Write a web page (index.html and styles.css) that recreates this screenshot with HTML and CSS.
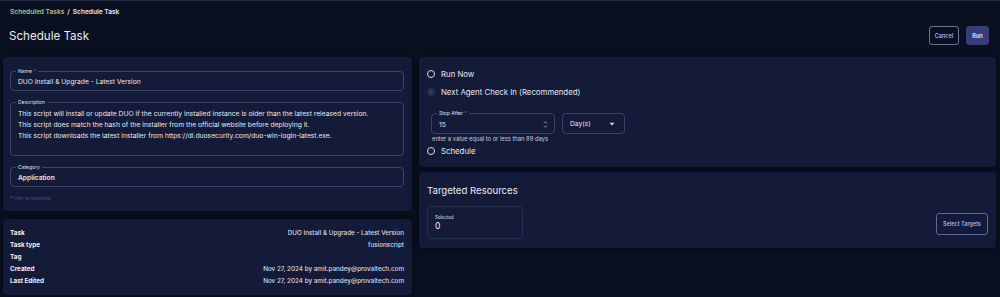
FILE: index.html
```html
<!DOCTYPE html>
<html lang="en">

<head>
    <meta charset="UTF-8">
    <meta name="viewport" content="width=device-width, initial-scale=1.0">
    <title>Schedule Task</title>
    <link rel="stylesheet" href="styles.css">
</head>

<body>
    <div class="topline"></div>
    <nav class="crumbs">
        <a href="#">Scheduled Tasks</a>
        <span class="sep">/</span>
        <span>Schedule Task</span>
    </nav>

    <div class="title-row">
        <h1>Schedule Task</h1>
        <div class="actions">
            <button class="btn btn-outline">Cancel</button>
            <button class="btn btn-primary">Run</button>
        </div>
    </div>

    <div class="layout">
        <!-- columna izquierda -->
        <div class="col">
            <section class="card form-card">
                <div class="field field-name">
                    <span class="field-label">Name <em>*</em></span>
                    <div class="field-value">DUO Install &amp; Upgrade - Latest Version</div>
                </div>
                <div class="field field-desc">
                    <span class="field-label">Description</span>
                    <div class="field-value">
                        <p>This script will install or update DUO if the currently installed instance is older than the latest released version.</p>
                        <p>This script does match the hash of the installer from the official website before deploying it.</p>
                        <p>This script downloads the latest installer from https://dl.duosecurity.com/duo-win-login-latest.exe.</p>
                    </div>
                </div>
                <div class="field field-name">
                    <span class="field-label">Category</span>
                    <div class="field-value strong">Application</div>
                </div>
                <div class="note"><em>*</em> Info is required</div>
            </section>

            <section class="card info-card">
                <div class="info-row"><span>Task</span><span>DUO Install &amp; Upgrade - Latest Version</span></div>
                <div class="info-row"><span>Task type</span><span>fusionscript</span></div>
                <div class="info-row"><span>Tag</span><span></span></div>
                <div class="info-row"><span>Created</span><span>Nov 27, 2024 by amit.pandey@provaltech.com</span></div>
                <div class="info-row"><span>Last Edited</span><span>Nov 27, 2024 by amit.pandey@provaltech.com</span></div>
            </section>
        </div>

        <!-- columna derecha -->
        <div class="col">
            <section class="card run-card">
                <label class="radio-row"><span class="radio"></span>Run Now</label>
                <label class="radio-row"><span class="radio radio-disabled"></span>Next Agent Check In (Recommended)</label>
                <div class="stop-after">
                    <div class="stop-fields">
                        <div class="field field-stop">
                            <span class="field-label">Stop After <em>*</em></span>
                            <div class="field-value">15</div>
                            <svg class="spin" width="5" height="9" viewBox="0 0 5 9">
                                <path d="M1 3.2 L2.5 1.7 L4 3.2" fill="none" stroke="#9aa1b8" stroke-width="0.9" />
                                <path d="M1 5.8 L2.5 7.3 L4 5.8" fill="none" stroke="#9aa1b8" stroke-width="0.9" />
                            </svg>
                        </div>
                        <div class="field field-select">
                            <div class="field-value">Day(s)</div>
                            <svg class="caret" width="6" height="4" viewBox="0 0 6 4">
                                <path d="M0.5 0.8 L5.5 0.8 L3 3.4 Z" fill="#d6dae6" />
                            </svg>
                        </div>
                    </div>
                    <div class="helper">enter a value equal to or less than 89 days</div>
                </div>
                <label class="radio-row"><span class="radio"></span>Schedule</label>
            </section>

            <section class="card targets-card">
                <h2>Targeted Resources</h2>
                <div class="targets-row">
                    <div class="selected-box">
                        <span class="sel-label">Selected</span>
                        <span class="sel-value">0</span>
                    </div>
                    <button class="btn btn-outline btn-targets">Select Targets</button>
                </div>
            </section>
        </div>
    </div>
</body>

</html>
```

FILE: styles.css
```css
body {
    margin: 0;
    padding: 0 4px 0 3px;
    background-color: #0b1020;
    color: #e4e7f0;
    font-family: Inter, "Noto Sans", sans-serif;
    height: 297px;
    overflow: hidden;
}

.topline {
    height: 1px;
    margin: 0 -4px 0 -3px;
    background-color: #242b44;
}

/* Migas de pan */
.crumbs {
    display: flex;
    align-items: center;
    gap: 3px;
    margin-top: 5px;
    padding-left: 7px;
    height: 12px;
    font-size: 6.6px;
    font-weight: 600;
    color: #e6e8ef;
}

.crumbs a {
    color: #a9c282;
    text-decoration: none;
}

.title-row {
    display: flex;
    align-items: center;
    justify-content: space-between;
    height: 35px;
    padding: 0 7px 0 6px;
}

h1 {
    margin: 0;
    font-size: 11.6px;
    font-weight: 400;
    color: #e8eaf2;
}

.actions {
    display: flex;
    gap: 7px;
}

.btn {
    font-family: inherit;
    font-size: 5.5px;
    font-weight: 600;
    height: 19px;
    border-radius: 3px;
    padding: 0;
    cursor: pointer;
}

.btn-outline {
    width: 30px;
    background: transparent;
    border: 1px solid #6b7190;
    color: #a6aeea;
}

.btn-primary {
    width: 23px;
    background-color: #373d78;
    border: 1px solid #373d78;
    color: #eef0ff;
}

/* Rejilla principal */
.layout {
    display: grid;
    grid-template-columns: 409px 1fr;
    gap: 7px;
    margin-top: 4px;
}

.col {
    display: flex;
    flex-direction: column;
}

.card {
    background-color: #131b38;
    border-radius: 4px;
    box-shadow: 0 0 6px rgba(0, 0, 0, 0.45);
}

.form-card {
    display: flex;
    flex-direction: column;
    gap: 11px;
    height: 154px;
    box-sizing: border-box;
    padding: 14px 8px 10px 7px;
}

.field {
    position: relative;
    border: 1px solid #3a4364;
    border-radius: 4px;
    box-sizing: border-box;
}

.field-label {
    position: absolute;
    top: -4px;
    left: 5px;
    padding: 0 2px;
    font-size: 5px;
    line-height: 6px;
    background-color: #131b38;
    color: #dde0ea;
}

.field-label em,
.note em {
    font-style: normal;
    color: #d0405a;
}

.field-name {
    height: 20px;
    display: flex;
    align-items: center;
    padding: 1px 7px 0;
}

.field-value {
    font-size: 6.7px;
    color: #e6e8ef;
}

.field-value.strong {
    font-weight: 600;
}

.field-desc {
    height: 54px;
    padding: 5px 7px 0;
}

.field-desc p {
    margin: 0;
    line-height: 11px;
    font-size: 6.75px;
}

.note {
    margin-top: -3px;
    font-size: 5.2px;
    line-height: 6px;
    color: #4a5273;
}

.info-card {
    margin-top: 8px;
    padding: 8px 8px 8px 7px;
}

.info-row {
    display: flex;
    justify-content: space-between;
    line-height: 12px;
    font-size: 6.3px;
}

.info-row span:first-child {
    font-weight: 700;
    color: #eef0f6;
}

.info-row span:last-child {
    font-weight: 500;
    color: #d8dbe6;
}

/* Tarjeta de ejecución */
.run-card {
    height: 110px;
    box-sizing: border-box;
    padding: 8px 8px 6px 8px;
}

.radio-row {
    display: flex;
    align-items: center;
    gap: 6px;
    height: 18px;
    font-size: 7.8px;
    color: #e4e7f0;
}

.radio {
    width: 6px;
    height: 6px;
    border: 1.4px solid #d7dbe6;
    border-radius: 50%;
    flex-shrink: 0;
}

.radio-disabled {
    border-color: #283052;
    background: radial-gradient(circle, #3a4264 0 1.3px, #283052 1.6px);
}

.stop-after {
    margin: 12px 0 0 4px;
}

.stop-fields {
    display: flex;
    gap: 7px;
}

.field-stop,
.field-select {
    height: 21px;
    display: flex;
    align-items: center;
    justify-content: space-between;
}

.field-stop {
    width: 124px;
    padding: 2px 6px 0 7px;
}

.field-select {
    width: 63px;
    padding: 0 9px 0 7px;
}

.helper {
    margin-top: 2px;
    line-height: 6px;
    font-size: 5.8px;
    color: #c8ccd8;
    padding-left: 1px;
}

/* Recursos */
.targets-card {
    margin-top: 5px;
    height: 76px;
    box-sizing: border-box;
    padding: 12px 8px 9px 8px;
}

h2 {
    margin: 0;
    font-size: 9.6px;
    line-height: 14px;
    font-weight: 400;
    color: #e8eaf2;
}

.targets-row {
    display: flex;
    align-items: center;
    justify-content: space-between;
    margin-top: 8px;
}

.selected-box {
    display: flex;
    flex-direction: column;
    justify-content: center;
    width: 96px;
    height: 33px;
    box-sizing: border-box;
    padding: 2px 7px 0;
    border: 1px solid #262f4e;
    border-radius: 4px;
}

.sel-label {
    font-size: 4.5px;
    line-height: 6px;
    color: #dfe2ea;
}

.sel-value {
    font-size: 8.5px;
    line-height: 11px;
    color: #eef0f6;
}

.btn-targets {
    width: 52px;
    height: 22px;
    margin-top: 2px;
    border-color: #5e679e;
    color: #a6aeea;
}
```
